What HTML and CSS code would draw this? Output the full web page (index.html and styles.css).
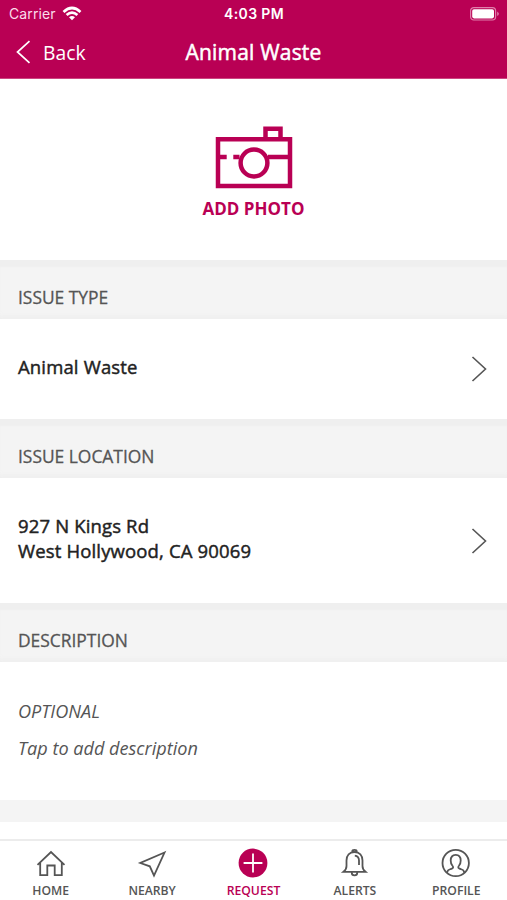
FILE: index.html
```html
<!DOCTYPE html>
<html lang="en">
<head>
<meta charset="utf-8">
<title>Animal Waste</title>
<link rel="stylesheet" href="styles.css">
</head>
<body>
<div class="app">
  <header class="header">
    <div class="status">
      <div class="carrier"><span>Carrier</span>
        <svg width="20" height="16" viewBox="0 0 20 16" fill="none" stroke="#fff" stroke-width="2.7"><path d="M1.5 5.9Q10 -1.9 18.5 5.9M4.6 9.1Q10 4.2 15.4 9.1"/><path d="M7 11.3Q10 8.8 13 11.3L10 14.3Z" fill="#fff" stroke="none"/></svg>
      </div>
      <span class="time">4:03 PM</span>
      <svg class="battery" width="32" height="16" viewBox="0 0 32 16"><rect x="1.6" y="1.6" width="25" height="12.4" rx="3.2" fill="none" stroke="#e07fab" stroke-width="1.2"/><rect x="3.2" y="3.2" width="21.8" height="9.2" rx="1.8" fill="#fff"/><path d="M28.2 5.5Q31.6 7.8 28.2 10.1Z" fill="#e07fab"/></svg>
    </div>
    <nav class="nav">
      <a class="back"><svg width="15" height="24" viewBox="0 0 15 24" fill="none" stroke="#fff" stroke-width="1.7"><path d="M13.5 1.2L1.5 12L13.5 22.8"/></svg><span>Back</span></a>
      <h1>Animal Waste</h1>
    </nav>
  </header>
  <main>
    <section class="photo">
      <svg width="78" height="64" viewBox="0 0 78 64" fill="none" stroke="#b90054" stroke-width="4.5"><path d="M3 14.2H75V61H3ZM50.5 14V3.8H65.5V14M1 32H11.7M18.3 32H24.5M53 32H75"/><circle cx="39" cy="38" r="13.4"/></svg>
      <span>ADD PHOTO</span>
    </section>
    <h2 class="band">ISSUE TYPE</h2>
    <section class="row type"><p>Animal Waste</p><svg width="16" height="26" viewBox="0 0 16 26" fill="none" stroke="#555" stroke-width="1.6"><path d="M1.5 1L14.5 13L1.5 25"/></svg></section>
    <h2 class="band">ISSUE LOCATION</h2>
    <section class="row location"><p>927 N Kings Rd<br>West Hollywood, CA 90069</p><svg width="16" height="26" viewBox="0 0 16 26" fill="none" stroke="#555" stroke-width="1.6"><path d="M1.5 1L14.5 13L1.5 25"/></svg></section>
    <h2 class="band">DESCRIPTION</h2>
    <section class="description"><p>OPTIONAL</p><p>Tap to add description</p></section>
    <div class="gap"></div>
  </main>
  <nav class="tabs">
    <a><svg viewBox="0 0 32 32"><path d="M2.5 17.8L16 5L29.5 17.8M5.2 15.5V28.2H12.3V18.5H19.7V28.2H26.8V15.5"/></svg><span>HOME</span></a>
    <a><svg viewBox="0 0 32 32"><path d="M28.5 5.5L4.3 16L13.8 19.3L18 28.5Z"/></svg><span>NEARBY</span></a>
    <a class="active"><svg viewBox="0 0 32 32"><circle cx="16" cy="16" r="14.4"/><path d="M16 6.6V25.4M6.6 16H25.4"/></svg><span>REQUEST</span></a>
    <a><svg viewBox="0 0 32 32"><path d="M13.3 5V4.2Q13.3 2.9 15.5 2.9T17.7 4.2V5M4.5 24.8Q7.5 22.5 7.5 19V13.5C7.5 8.5 10.5 5 15.5 5S23.5 8.5 23.5 13.5V19Q23.5 22.5 26.5 24.8ZM12.8 25V26Q12.8 28.3 15.5 28.3T18.2 26V25M15.8 8.6Q20 9 20 13.6V18"/></svg><span>ALERTS</span></a>
    <a><svg viewBox="0 0 32 32"><circle cx="15.7" cy="16" r="13.2"/><path d="M6.9 25.8Q7.5 22.8 10.7 22Q13.1 21.5 13.1 20.3Q13.1 19.4 12.3 18.5Q10.7 16.5 10.7 13.5C10.7 10 12.7 7.8 15.7 7.8S20.7 10 20.7 13.5Q20.7 16.5 19.1 18.5Q18.3 19.4 18.3 20.3Q18.3 21.5 20.7 22Q23.9 22.8 24.5 25.8"/></svg><span>PROFILE</span></a>
  </nav>
</div>
</body>
</html>
```
FILE: styles.css
```css
* { box-sizing: border-box; margin: 0; padding: 0; }
body { background: #fff; color: #222; font-family: "Open Sans", "Noto Sans", sans-serif; }
svg { display: block; flex: none; }
.app { width: 507px; height: 900px; display: flex; flex-direction: column; overflow: hidden; }
.header { height: 79px; flex: none; background: #b90054; color: #fff; border-bottom: 1px solid #cc4681; }
.status { height: 27px; display: grid; grid-template-columns: 1fr auto 1fr; align-items: center; padding: 0 6px 0 9px; font: 14px Inter, sans-serif; }
.carrier { display: flex; align-items: center; gap: 6px; }
.carrier span { letter-spacing: .1px; color: #fbdceb; }
.time { font-weight: 600; font-size: 14px; letter-spacing: .35px; margin-left: -2px; }
.battery { justify-self: end; }
.nav { height: 50px; display: grid; grid-template-columns: 1fr auto 1fr; align-items: center; padding: 0 16px; }
.back { display: flex; align-items: center; gap: 12px; font-size: 19.3px; }
.nav h1 { font-size: 21px; font-weight: 400; letter-spacing: .2px; -webkit-text-stroke: .5px currentColor; }
.photo { height: 181px; display: flex; flex-direction: column; align-items: center; padding-top: 46px; color: #b90054; font-size: 17px; font-weight: 700; }
.photo span { line-height: 24px; margin-top: 8px; }
.band { height: 59px; padding: 25px 18px 0; background: #f4f4f4; color: #555; font-size: 17.4px; line-height: 24px; font-weight: 400; -webkit-text-stroke: .3px currentColor; box-shadow: inset 0 9px 2px -2px #efefef, inset 0 -5px 4px -2px #efefef; }
.row { display: flex; align-items: center; justify-content: space-between; padding: 0 20px 0 18px; font-size: 18.5px; font-weight: 400; letter-spacing: .15px; -webkit-text-stroke: .45px currentColor; line-height: 25px; }
.type { height: 100px; }
.type p { margin-top: -5px; }
.location { height: 125px; }
.location p { margin-top: -6px; }
.description { height: 138px; padding: 31px 18px 0; color: #555; font-size: 18.1px; line-height: 37px; font-style: italic; }
.gap { height: 22px; background: #f4f4f4; }
main { flex: 1; min-height: 0; }
.tabs { height: 61px; flex: none; border-top: 2px solid #ececec; display: grid; grid-template-columns: repeat(5, 1fr); padding-top: 6px; background: #fff; }
.tabs a { display: flex; flex-direction: column; align-items: center; color: #555; font-size: 12.2px; font-weight: 600; }
.tabs svg { width: 32px; height: 32px; fill: none; stroke: #555; stroke-width: 1.8; }
.tabs span { line-height: 18px; margin-top: 3px; }
.tabs .active { color: #b90054; font-weight: 600; }
.active circle { fill: #b90054; stroke: none; }
.tabs .active path { stroke: #fff; }
```
